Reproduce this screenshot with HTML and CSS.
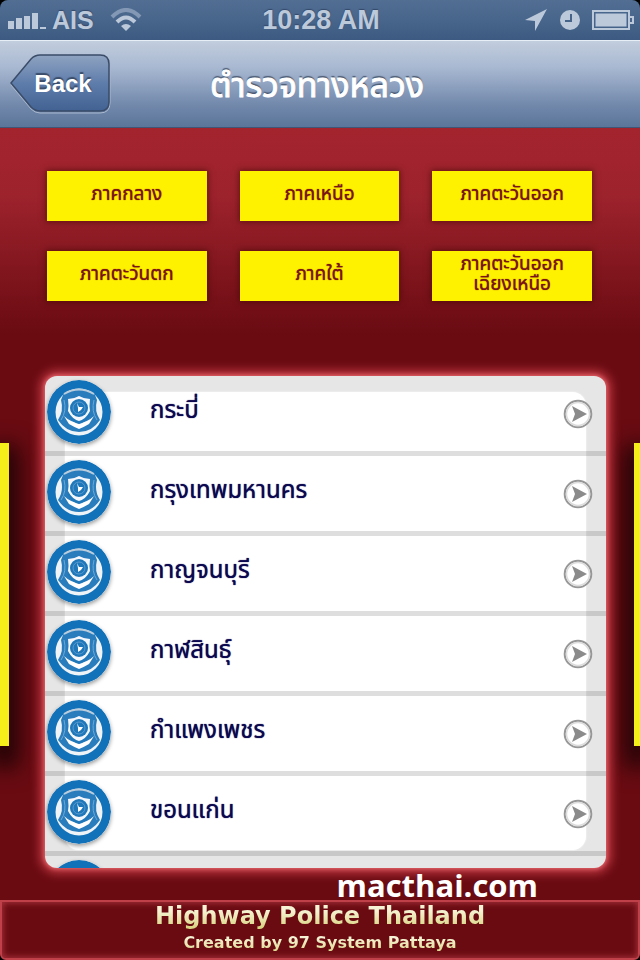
FILE: index.html
```
<!DOCTYPE html>
<html lang="th">
<head>
  <meta charset="utf-8">
  <meta name="viewport" content="width=device-width, initial-scale=1">
  <title>ตำรวจทางหลวง</title>
  <link rel="stylesheet" href="styles.css">
</head>
<body>
  <!-- shared icons -->
  <svg class="icon-defs" width="0" height="0">
    <symbol id="badge" viewBox="0 0 64 64">
      <circle cx="32" cy="32" r="32" fill="#1272b9"/>
      <circle cx="32" cy="32" r="23.500" fill="#eef3f8"/>
      <path d="M16 15Q32 4 48 15L50 20Q47 31 53 40Q45 52 32 52Q19 52 11 40Q17 31 14 20Z" fill="#2a7dbd"/>
      <path d="M17 14Q32 5 47 14" fill="none" stroke="#b9cddd" stroke-width="2"/>
      <path d="M17 20Q20 31 14 40M47 20Q44 31 50 40" fill="none" stroke="#6fa8d4" stroke-width="1"/>
      <path d="M21 19Q27 19 32 16Q37 19 43 19Q42 26 43 31Q39 39 32 41Q25 39 21 31Q22 26 21 19Z" fill="#f4f8fc"/>
      <path d="M17 36Q23 42 32 43Q41 42 47 36L42 44Q37 47 32 49Q27 47 22 44Z" fill="#fff"/>
      <circle cx="32" cy="28" r="9" fill="#1f78ba"/>
      <circle cx="32" cy="28" r="6" fill="none" stroke="#5a9bce" stroke-width="1"/>
      <path d="M30 23L32 27L36 27L34 30L31 32L31 28Z" fill="#fff"/>
      <path d="M21 34Q25 41 32 43Q39 41 43 34" fill="none" stroke="#1f78ba" stroke-width="2"/>
    </symbol>
    <symbol id="arrow" viewBox="0 0 30 30">
      <circle cx="15" cy="15" r="13.300" fill="#fff" stroke="#979797" stroke-width="2"/>
      <circle cx="15" cy="15" r="11.500" fill="none" stroke="#dcdcdc" stroke-width="1.500"/>
      <path d="M9 7L24 15L9 23L12 15Z" fill="#8b8b8b"/>
    </symbol>
  </svg>

  <header class="status-bar">
    <div class="carrier">
      <svg width="38" height="18" viewBox="0 0 38 18" fill="#bcc9db">
        <path d="M0 10h6v8H0zM8 7h6v11H8zM16 5h6v13h-6zM24 2h6v16h-6zM32 16h6v2h-6z"/>
      </svg>
      <span>AIS</span>
      <svg class="wifi" width="32" height="24" viewBox="0 0 32 24" fill="none" stroke-width="4">
        <path d="M2 9Q16 -5 30 9" stroke="#8298b5"/>
        <path d="M7 14Q16 5 25 14" stroke="#bcc9db"/>
        <path d="M16 23L11 18Q16 14 21 18Z" fill="#bcc9db"/>
      </svg>
    </div>
    <div class="clock">10:28 AM</div>
    <div class="indicators">
      <svg width="24" height="24" viewBox="0 0 24 24"><path d="M23 1L11 23V13L1 12Z" fill="#bcc9db"/></svg>
      <svg width="20" height="20" viewBox="0 0 20 20">
        <circle cx="10" cy="10" r="10" fill="#bcc9db"/>
        <path d="M11 4V11H5" fill="none" stroke="#46648a" stroke-width="2"/>
      </svg>
      <svg width="42" height="20" viewBox="0 0 42 20">
        <rect x="1" y="1" width="36" height="18" fill="none" stroke="#bcc9db" stroke-width="2"/>
        <rect x="3" y="3" width="32" height="14" fill="#bcc9db" stroke="#46648a" stroke-width="1"/>
        <path d="M37 7H41V13H37" fill="none" stroke="#bcc9db" stroke-width="2"/>
      </svg>
    </div>
  </header>

  <nav class="nav-bar">
    <button class="back-button" type="button">
      <svg class="back-shape" viewBox="0 0 102 60">
        <defs>
          <linearGradient id="backFill" x1="0" y1="0" x2="0" y2="1">
            <stop offset="0" stop-color="#8fa3c1"/>
            <stop offset="0.500" stop-color="#5f7dab"/>
            <stop offset="1" stop-color="#426293"/>
          </linearGradient>
        </defs>
        <path d="M1 31L21 6Q25 2 30 2H90Q100 2 100 12V49Q100 59 90 59H30Q25 59 21 55Z" fill="none" stroke="#a9b8cd" stroke-width="1"/>
        <path d="M1 29L21 5Q25 1 30 1H90Q99 1 99 10V48Q99 57 90 57H30Q25 57 21 53Z" fill="url(#backFill)" stroke="#3a4c68" stroke-width="1.500"/>
      </svg>
      <span class="back-label">Back</span>
    </button>
    <h1 class="title">ตำรวจทางหลวง</h1>
  </nav>

  <main class="content">
    <div class="regions">
      <button type="button">ภาคกลาง</button>
      <button type="button">ภาคเหนือ</button>
      <button type="button">ภาคตะวันออก</button>
      <button type="button">ภาคตะวันตก</button>
      <button type="button">ภาคใต้</button>
      <button type="button">ภาคตะวันออก<br>เฉียงเหนือ</button>
    </div>

    <div class="list-area">
      <div class="side-tab left"></div>
      <ul class="provinces">
        <li><a href="#"><svg class="badge"><use href="#badge"/></svg><span>กระบี่</span><svg class="arrow"><use href="#arrow"/></svg></a></li>
        <li><a href="#"><svg class="badge"><use href="#badge"/></svg><span>กรุงเทพมหานคร</span><svg class="arrow"><use href="#arrow"/></svg></a></li>
        <li><a href="#"><svg class="badge"><use href="#badge"/></svg><span>กาญจนบุรี</span><svg class="arrow"><use href="#arrow"/></svg></a></li>
        <li><a href="#"><svg class="badge"><use href="#badge"/></svg><span>กาฬสินธุ์</span><svg class="arrow"><use href="#arrow"/></svg></a></li>
        <li><a href="#"><svg class="badge"><use href="#badge"/></svg><span>กำแพงเพชร</span><svg class="arrow"><use href="#arrow"/></svg></a></li>
        <li><a href="#"><svg class="badge"><use href="#badge"/></svg><span>ขอนแก่น</span><svg class="arrow"><use href="#arrow"/></svg></a></li>
        <li><a href="#"><svg class="badge"><use href="#badge"/></svg></a></li>
      </ul>
      <div class="side-tab right"></div>
    </div>

    <div class="watermark">macthai.com</div>
  </main>

  <footer class="footer">
    <div class="footer-title">Highway Police Thailand</div>
    <div class="footer-credit">Created by 97 System Pattaya</div>
  </footer>
</body>
</html>
```
FILE: styles.css
```
* {
  box-sizing: border-box;
}

body {
  margin: 0;
  height: 100vh;
  display: flex;
  flex-direction: column;
  overflow: hidden;
  background: #000;
  font-family: "Liberation Sans", "Noto Sans Thai", "Loma", sans-serif;
}

.icon-defs {
  position: absolute;
}

button {
  font-family: inherit;
  border: none;
  padding: 0;
  cursor: pointer;
}

/* status bar */
.status-bar {
  flex: none;
  height: 40px;
  display: grid;
  grid-template-columns: 1fr auto 1fr;
  align-items: center;
  padding: 0 6px 0 8px;
  border-radius: 8px 8px 0 0;
  background: linear-gradient(#526e93, #3d5b82);
  color: #bcc9db;
  font-size: 25px;
  font-weight: bold;
  text-shadow: 0 -1px 1px #34496a;
}

.carrier,
.indicators {
  display: flex;
  align-items: center;
}

.carrier {
  gap: 6px;
}

.wifi {
  margin-left: 10px;
}

.indicators {
  justify-content: flex-end;
  gap: 12px;
}

.clock {
  font-size: 27px;
}

/* navigation bar */
.nav-bar {
  flex: none;
  height: 88px;
  display: grid;
  grid-template-columns: 1fr auto 1fr;
  align-items: center;
  padding: 0 16px 0 10px;
  border-top: 1px solid #e8eef6;
  border-bottom: 1px solid #3f5677;
  background: linear-gradient(#c2cddd, #a9b9d2 30%, #7188ab 75%, #5a7599);
}

.back-button {
  display: grid;
  justify-self: start;
  width: 102px;
  height: 60px;
  background: none;
  color: #fff;
}

.back-shape,
.back-label {
  grid-area: 1 / 1;
}

.back-label {
  align-self: center;
  padding-left: 4px;
  font-size: 24px;
  font-weight: bold;
  text-shadow: 0 -2px 1px #3a4c68;
}

.title {
  margin: 0;
  padding-top: 4px;
  color: #fff;
  font-size: 34px;
  font-weight: normal;
  -webkit-text-stroke: 1px #fff;
  text-shadow: 0 -2px 1px #4b5a72;
}

/* page content */
.content {
  flex: 1;
  min-height: 0;
  display: flex;
  flex-direction: column;
  background: linear-gradient(#a4242e, #9c222c 70px, #6a0b12 205px);
}

.regions {
  display: grid;
  grid-template-columns: repeat(3, 1fr);
  grid-auto-rows: 50px;
  gap: 30px 33px;
  padding: 43px 48px 75px 47px;
}

.regions button {
  padding-bottom: 4px;
  background: #fff200;
  color: #7a1414;
  font-size: 19px;
  line-height: 20px;
  text-shadow: 0 0 1px #7a1414;
  box-shadow: 0 0 6px 1px rgba(60, 10, 0, 0.6);
}

.list-area {
  flex: 1;
  min-height: 0;
  display: flex;
}

.side-tab {
  margin: 67px 0 122px;
  background: #f5ee1a;
  box-shadow: 0 12px 22px 10px rgba(0, 0, 0, 0.7);
}

.side-tab.left {
  width: 9px;
}

.side-tab.right {
  width: 6px;
}

.provinces {
  position: relative;
  z-index: 1;
  flex: 1;
  margin: 0 28px 0 36px;
  padding: 0;
  list-style: none;
  overflow: hidden;
  border-radius: 12px;
  background: #e6e6e6;
  box-shadow: 0 0 4px 1px #e8686e, 0 0 10px 6px #b8343e;
}

/* white sheet under the rows */
.provinces::before {
  content: "";
  position: absolute;
  z-index: -1;
  inset: 16px 20px 18px;
  border-radius: 14px;
  background: #fff;
  box-shadow: 0 0 2px #fff;
}

.provinces a {
  height: 80px;
  display: flex;
  align-items: flex-start;
  padding: 4px 13px 0 2px;
  border-bottom: 5px solid rgba(0, 0, 0, 0.13);
  color: #0c0850;
  font-size: 24px;
  line-height: 34px;
  text-shadow: 0 0 1px #0c0850;
  text-decoration: none;
}

.badge {
  width: 64px;
  height: 64px;
  border-radius: 50%;
  box-shadow: 0 2px 4px rgba(0, 0, 0, 0.4);
}

.provinces span {
  flex: 1;
  padding: 13px 0 0 39px;
}

.arrow {
  width: 30px;
  height: 30px;
  margin-top: 19px;
}

/* sits above the glow of the list */
.watermark {
  position: relative;
  z-index: 2;
  flex: none;
  height: 32px;
  padding-right: 102px;
  color: #fff;
  font-family: "Open Sans", sans-serif;
  font-size: 31px;
  font-weight: 700;
  line-height: 34px;
  text-align: right;
}

/* footer */
.footer {
  flex: none;
  height: 60px;
  border: 2px solid #c0404a;
  border-radius: 0 0 6px 6px;
  background: #6a0b12;
  box-shadow: inset 0 0 6px 1px #a8323c;
  font-family: "DejaVu Sans", sans-serif;
  font-weight: bold;
  text-align: center;
}

.footer-title,
.footer-credit {
  background: linear-gradient(#f6f3d4 30%, #d6d078);
  background-clip: text;
  -webkit-background-clip: text;
  color: transparent;
}

.footer-title {
  font-size: 24px;
  line-height: 28px;
}

.footer-credit {
  font-size: 16px;
  line-height: 26px;
}
```
